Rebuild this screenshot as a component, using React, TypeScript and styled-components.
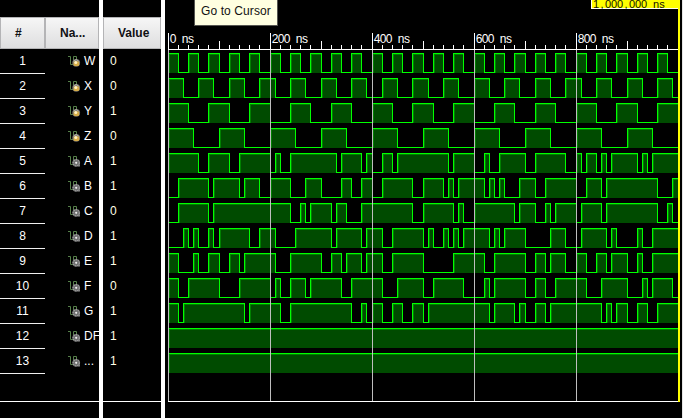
import React from "react";
import styled, { createGlobalStyle } from "styled-components";

const GlobalStyle = createGlobalStyle`
  * { box-sizing: border-box; }
  html, body { margin: 0; padding: 0; background: #000; overflow: hidden; }
  body { font-family: "Liberation Sans", Arial, sans-serif; font-size: 12px; color: #fff; }
`;

type Signal = { name: string; value: string; input?: boolean; start: 0 | 1; edges: number[] };

const END = 100;

function clock(half: number): number[] {
  const out: number[] = [];
  for (let k = half; k < END; k += half) out.push(k);
  return out;
}

// Edge times are in steps of 10 ns.
const SIGNALS: Signal[] = [
  { name: "W", value: "0", input: true, start: 1, edges: clock(2) },
  { name: "X", value: "0", input: true, start: 1, edges: clock(3) },
  { name: "Y", value: "1", input: true, start: 1, edges: clock(4) },
  { name: "Z", value: "0", input: true, start: 1, edges: clock(5) },
  { name: "A", value: "1", start: 1, edges: [6, 8, 12, 14, 20, 21, 22, 24, 33, 34, 38, 39, 40, 42, 44, 45, 55, 56, 60, 62, 63, 65, 70, 72, 78, 80, 81, 82, 84, 85, 86, 87, 92, 93, 94, 95] },
  { name: "B", value: "1", start: 0, edges: [2, 8, 9, 14, 15, 18, 20, 24, 27, 30, 34, 36, 38, 40, 42, 48, 50, 54, 55, 56, 57, 62, 63, 64, 65, 66, 69, 72, 74, 80, 82, 85, 86, 96, 99] },
  { name: "C", value: "0", start: 0, edges: [2, 8, 9, 24, 26, 27, 28, 32, 33, 35, 38, 48, 50, 56, 57, 58, 60, 68, 69, 72, 74, 75, 76, 80, 81, 85, 86, 96, 98, 99] },
  { name: "D", value: "1", start: 0, edges: [3, 4, 5, 6, 8, 9, 10, 16, 18, 21, 25, 32, 33, 38, 39, 42, 44, 50, 51, 52, 54, 55, 56, 57, 58, 63, 64, 65, 66, 70, 75, 78, 81, 86, 87, 88, 92, 93, 95] },
  { name: "E", value: "1", start: 1, edges: [2, 5, 6, 8, 10, 12, 14, 15, 21, 24, 30, 32, 34, 35, 38, 39, 42, 44, 50, 56, 62, 64, 70, 72, 74, 75, 78, 80, 82, 84, 86, 87, 90, 92, 93, 95] },
  { name: "F", value: "0", start: 1, edges: [2, 4, 10, 14, 20, 21, 22, 24, 27, 28, 34, 36, 42, 45, 50, 52, 58, 62, 63, 64, 70, 72, 74, 76, 82, 85, 90, 93, 94, 95, 99] },
  { name: "G", value: "1", start: 1, edges: [2, 3, 15, 16, 22, 24, 36, 38, 39, 40, 42, 44, 46, 48, 50, 51, 63, 64, 68, 69, 70, 72, 74, 75, 85, 86, 87, 88, 90, 92, 94, 96] },
  { name: "DF", value: "1", start: 1, edges: [] },
  { name: "...", value: "1", start: 1, edges: [] },
];

const Viewer = styled.div`
  display: grid;
  grid-template-columns: 99px 4px 58px 4px 517px 1px;
  width: 683px;
  height: 418px;
  background: #000;
`;

const Divider = styled.div<{ $tone?: string }>`
  background: ${(p) => p.$tone ?? "#fff"};
`;

const Table = styled.div`
  display: flex;
  flex-direction: column;
  height: 402px;
  padding-top: 17px;
  border-bottom: 1px solid #fff;
  overflow: hidden;
`;

const HeaderRow = styled.div`
  display: flex;
  height: 32px;
  flex: none;
`;

const HeaderCell = styled.div<{ $width: number; $indent: number }>`
  width: ${(p) => p.$width}px;
  padding: 8px 0 0 ${(p) => p.$indent}px;
  height: 32px;
  border: 1px solid #b4b4b6;
  background: linear-gradient(#f6f6f6, #dededf);
  color: #101014;
  font-weight: bold;
  line-height: 14px;
  white-space: nowrap;
`;

const Row = styled.div`
  display: flex;
  height: 25px;
  flex: none;
  line-height: 24px;
`;

const IndexCell = styled.div`
  width: 45px;
  border-bottom: 1px solid #f0f0f0;
  text-align: center;
`;

const NameCell = styled.div`
  display: flex;
  flex: 1;
  padding: 0 0 0 23px;
  gap: 3px;
  overflow: hidden;
  white-space: nowrap;

  svg { flex: none; margin-top: 6px; }
`;

const ValueCell = styled.div`
  padding-left: 7px;
  color: #ffffe8;
`;

const WavePane = styled.div`
  position: relative;
  overflow: hidden;
`;

const WaveChart = styled.svg`
  display: block;
  shape-rendering: crispEdges;
`;

const ScaleText = styled.text<{ $color: string; $size: number }>`
  font-family: "Liberation Sans", Arial, sans-serif;
  font-size: ${(p) => p.$size}px;
  fill: ${(p) => p.$color};
  text-anchor: middle;
`;

const Tooltip = styled.div`
  position: absolute;
  left: 29px;
  top: -1px;
  width: 84px;
  height: 27px;
  padding: 4px 0 0 6px;
  border: 1px solid #555550;
  background: #ffffe1;
  color: #111;
  line-height: 15px;
  letter-spacing: 0.1px;
  white-space: nowrap;
`;

function SignalIcon({ input }: { input?: boolean }) {
  return (
    <svg width="13" height="13" viewBox="0 0 13 13">
      <path d="M0 1.5H2.5V9.5H5.5V1.5H8.5V5" fill="none" stroke="#56804a" />
      <circle cx="8.2" cy="7.8" r="3.9" fill={input ? "#77736a" : "#707070"} />
      {input ? (
        <>
          <path d="M5.8 6.5Q8 2.8 10.7 6.5" fill="none" stroke="#b8b8b4" />
          <rect x="5.6" y="6.2" width="5.6" height="4.8" rx="1.6" fill="#d8ae48" />
          <circle cx="7.8" cy="7.6" r="1.5" fill="#fff2c0" />
        </>
      ) : (
        <>
          <circle cx="8.2" cy="7.8" r="3.1" fill="none" stroke="#b4b4b4" strokeDasharray="1.3 1" />
          <circle cx="8.2" cy="7.8" r="1.1" fill="#ededed" />
          <path d="M10 9.5h2v2h-2z" fill="#858585" />
        </>
      )}
    </svg>
  );
}

// The pane starts at x = 165; time zero is three pixels inside it.
const xAt = (k: number) => 3 + Math.floor((k * 51) / 10 + 1e-6);

// Text of the time axis: every character is centred in a six-pixel cell.
function CellText({ x, y, text, color = "#fff", size = 12 }: { x: number; y: number; text: string; color?: string; size?: number }) {
  const xs = Array.from(text, (_, i) => x + 3 + i * 6).join(" ");
  return (
    <ScaleText x={xs} y={y} $color={color} $size={size}>
      {text}
    </ScaleText>
  );
}

function Wave({ signal, top }: { signal: Signal; top: number }) {
  const bounds = [0, ...signal.edges, END];
  const parts: React.ReactNode[] = [];
  let high = signal.start === 1;
  for (let i = 0; i < bounds.length - 1; i++) {
    const x = xAt(bounds[i]);
    const w = xAt(bounds[i + 1]) - x;
    parts.push(
      <g key={i}>
        {high && (
          <>
            <rect x={x} y={top} width={w} height={20} fill="#004b00" />
            <rect x={x + 1} y={top + 1} width={w - 1} height={1} fill="#008000" />
            <rect x={x + 1} y={top + 1} width={1} height={19} fill="#008000" />
          </>
        )}
        <rect x={x} y={high ? top : top + 19} width={w} height={1} fill="#0f0" />
        {i > 0 && <rect x={x} y={top} width={1} height={20} fill="#0f0" />}
      </g>,
    );
    high = !high;
  }
  return <g>{parts}</g>;
}

function Scale() {
  const ticks: React.ReactNode[] = [];
  for (let k = 0; k < END; k += 2) {
    const height = k % 20 === 0 ? 16 : 4;
    ticks.push(<rect key={k} x={xAt(k)} y={49 - height} width={1} height={height} fill="#fff" />);
  }
  for (let k = 10; k < END; k += 20) {
    ticks.push(<rect key={`mid${k}`} x={xAt(k)} y={41} width={1} height={8} fill="#fff" />);
  }
  return (
    <g>
      {ticks}
      <rect x={3} y={49} width={510} height={1} fill="#fff" />
      {[0, 200, 400, 600, 800].map((t) => (
        <CellText key={t} x={xAt(t / 10) + 2} y={43} text={`${t} ns`} />
      ))}
    </g>
  );
}

function Cursor() {
  return (
    <g>
      <rect x={426} y={0} width={89} height={9} fill="#fffff0" />
      <rect x={427} y={0} width={88} height={8} fill="#ff0" />
      <rect x={513} y={0} width={2} height={402} fill="#ff0" />
      <CellText x={428} y={8} text="1,000,000 ns" color="#111100" size={11} />
    </g>
  );
}

export default function App() {
  return (
    <>
      <GlobalStyle />
      <Viewer>
        <Table>
          <HeaderRow>
            <HeaderCell $width={45} $indent={14}>#</HeaderCell>
            <HeaderCell $width={54} $indent={14}>Na...</HeaderCell>
          </HeaderRow>
          {SIGNALS.map((s, i) => (
            <Row key={s.name}>
              <IndexCell>{i + 1}</IndexCell>
              <NameCell>
                <SignalIcon input={s.input} />
                <span>{s.name}</span>
              </NameCell>
            </Row>
          ))}
        </Table>
        <Divider />
        <Table>
          <HeaderRow>
            <HeaderCell $width={58} $indent={14}>Value</HeaderCell>
          </HeaderRow>
          {SIGNALS.map((s) => (
            <Row key={s.name}>
              <ValueCell>{s.value}</ValueCell>
            </Row>
          ))}
        </Table>
        <Divider />
        <WavePane>
          <WaveChart width="517" height="418" viewBox="0 0 517 418">
            {SIGNALS.map((s, i) => (
              <Wave key={s.name} signal={s} top={53 + i * 25} />
            ))}
            {[0, 20, 40, 60, 80].map((k) => (
              <rect key={k} x={xAt(k)} y={50} width={1} height={352} fill="#bebebe" />
            ))}
            <Scale />
            <rect x={3} y={401} width={510} height={1} fill="#fff" />
            <Cursor />
          </WaveChart>
          <Tooltip>Go to Cursor</Tooltip>
        </WavePane>
        <Divider $tone="#e6e6e6" />
      </Viewer>
    </>
  );
}
